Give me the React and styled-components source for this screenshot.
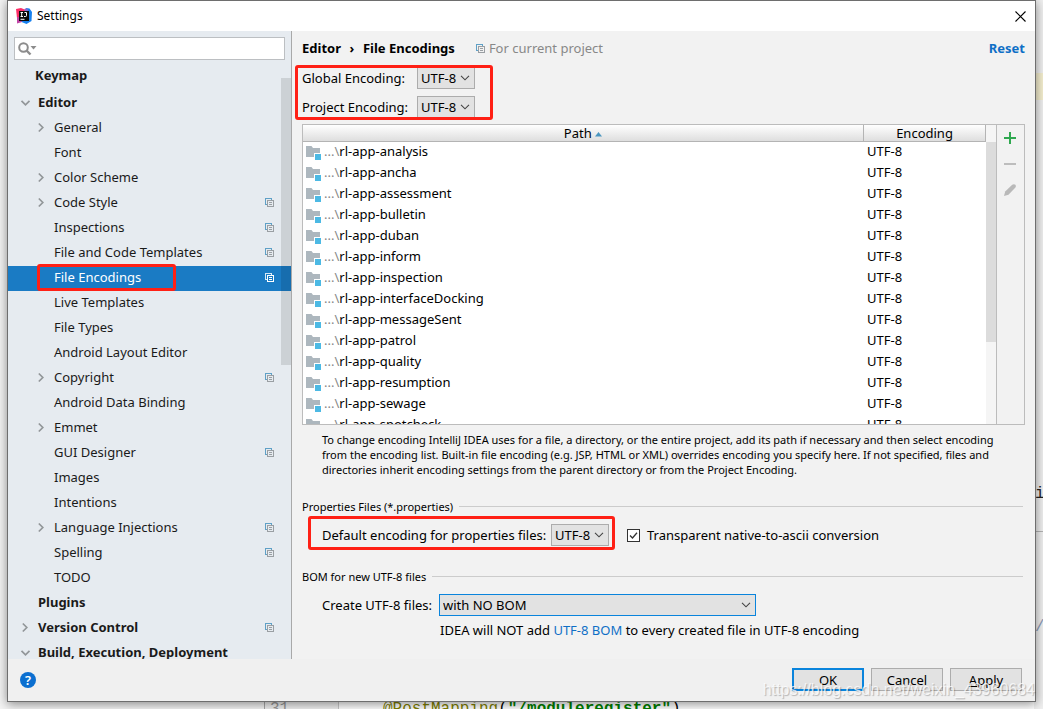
import React, { useState } from "react";
import styled, { createGlobalStyle, css } from "styled-components";

const GlobalStyle = createGlobalStyle`
  *, *::before, *::after { box-sizing: border-box; }
  body {
    margin: 0;
    background: #ffffff;
    color: #000000;
    font: 13px/20px "Noto Sans", "Open Sans", "Noto Sans CJK SC", sans-serif;
  }
  button, input, select { font: inherit; color: inherit; margin: 0; }
`;

/* ---------- editor behind the dialog ---------- */

const Page = styled.div`
  position: relative;
  height: 100vh;
  padding: 0 7px 7px;
  overflow: hidden;
`;

const Backdrop = styled.div`
  position: absolute;
  inset: 0;
  display: flex;
  align-items: stretch;
  background: #ffffff;
  font: 16px/18px "Liberation Mono", monospace;
`;

const ProjectPane = styled.div`
  flex: none;
  width: 265px;
  background: #f4f4f4;
  border-right: 1px solid #a8a8a8;
`;

const Gutter = styled.div`
  flex: none;
  display: flex;
  align-items: flex-end;
  width: 74px;
  height: calc(100% + 9px);
  padding-left: 5px;
  background: #f0f0f0;
  border-right: 1px solid #c8c8c8;
  color: #999999;
`;

const CodeArea = styled.div`
  flex: 1;
  display: flex;
  align-items: flex-end;
  height: calc(100% + 9px);
  padding-left: 44px;
  color: #808000;
`;

const Code = styled.code`
  font: inherit;
  white-space: nowrap;
  i { font-style: normal; color: #000000; }
  b { color: #008000; }
`;

const EditorStripe = styled.div`
  flex: none;
  display: flex;
  flex-direction: column;
  width: 9px;
  background: #f0f0f0;
`;

const StripeMark = styled.div`
  flex: none;
  height: 27px;
  margin: 73px 0 385px;
  background: #f5efcf;
`;

const StripeText = styled.span`
  flex: none;
  height: 47px;
  margin-bottom: 86px;
  padding-left: 1px;
  color: ${(p) => (p.$muted ? "#8c9cb8" : "#222222")};
  border-bottom: 1px solid ${(p) => (p.$muted ? "transparent" : "#b4b4b4")};
`;

/* ---------- dialog frame ---------- */

const Dialog = styled.main`
  position: relative;
  display: flex;
  flex-direction: column;
  height: 100%;
  border: 1px solid #6e6e6e;
  background: #f2f2f2;
  box-shadow: 0 2px 10px rgba(0, 0, 0, 0.45);
`;

const TitleBar = styled.header`
  flex: none;
  display: flex;
  align-items: center;
  gap: 5px;
  height: 30px;
  padding: 0 4px 0 8px;
  background: #ffffff;
`;

const Title = styled.h1`
  flex: 1;
  margin: 0;
  font-size: 12px;
  font-weight: 400;
`;

const PlainButton = styled.button`
  display: flex;
  align-items: center;
  justify-content: center;
  width: 22px;
  height: 22px;
  padding: 0;
  border: 0;
  background: none;
`;

const Body = styled.div`
  flex: 1;
  display: flex;
  min-height: 0;
`;

/* ---------- settings tree ---------- */

const Sidebar = styled.nav`
  position: relative;
  flex: none;
  display: flex;
  flex-direction: column;
  width: 284px;
  overflow: hidden;
  background: #e6ebf0;
  border-right: 1px solid #a9a9a9;
`;

const SearchBox = styled.label`
  flex: none;
  display: flex;
  align-items: center;
  height: 23px;
  margin: 6px 6px 0;
  padding-left: 3px;
  background: #ffffff;
  border: 1px solid #bcbfc2;
`;

const SearchInput = styled.input`
  flex: 1;
  min-width: 0;
  height: 20px;
  padding: 0 4px;
  border: 0;
  outline: 0;
  background: transparent;
`;

const Tree = styled.ul`
  margin: 0;
  padding: 4px 0 0;
  list-style: none;
`;

const indents = { top: 27, group: 12, item: 28 };

const TreeRow = styled.li`
  display: flex;
  align-items: center;
  height: 25px;
  margin-bottom: ${(p) => (p.$level === "top" ? 2 : 0)}px;
  padding: 0 17px 2px ${(p) => indents[p.$level]}px;
  color: #1a1a1a;
  font-weight: ${(p) => (p.$level === "item" ? 400 : 700)};
  ${(p) =>
    p.$selected &&
    css`
      background: #1a7bc4;
      color: #ffffff;
    `}
`;

const Arrow = styled.span`
  display: flex;
  align-items: center;
  width: 18px;
`;

const TreeLabel = styled.a`
  flex: 1;
  padding-bottom: 2px;
  color: inherit;
  text-decoration: none;
  white-space: nowrap;
`;

const marked = css`
  position: relative;
  &::after {
    content: "";
    position: absolute;
    border: 3px solid #ff2015;
    border-radius: 3px;
    pointer-events: none;
  }
`;

const MarkedRow = styled(TreeRow)`
  ${marked}
  &::after { inset: -2px 115px 0 29px; }
`;

const TreeScroll = styled.div`
  position: absolute;
  top: 47px;
  right: 0;
  width: 10px;
  height: 287px;
  background: rgba(0, 0, 0, 0.11);
`;

/* ---------- settings page ---------- */

const Content = styled.section`
  flex: 1;
  min-width: 0;
  padding: 7px 10px 0;
`;

const Crumbs = styled.div`
  display: flex;
  align-items: center;
  height: 20px;
  font-weight: 700;
`;

const CrumbSep = styled.span`
  width: 22px;
  text-align: center;
`;

const Scope = styled.span`
  flex: 1;
  display: flex;
  align-items: center;
  gap: 4px;
  margin-left: 21px;
  color: #888888;
  font-weight: 400;
`;

const Link = styled.a`
  color: #0f6fc6;
  text-decoration: none;
`;

const EncodingBlock = styled.div`
  ${marked}
  display: grid;
  row-gap: 7px;
  width: 191px;
  padding: 9px 0 6px;
  &::after { inset: 7px 0 4px -7px; }
`;

const Field = styled.div`
  display: flex;
  align-items: center;
`;

const FieldLabel = styled.label`
  width: ${(p) => p.$width}px;
  padding-bottom: 1px;
  white-space: nowrap;
`;

const SelectFrame = styled.span`
  display: inline-grid;
  align-items: center;
  width: ${(p) => p.$width}px;
  svg {
    grid-area: 1 / 1;
    justify-self: end;
    margin-right: 5px;
    pointer-events: none;
  }
`;

const SelectBox = styled.select`
  grid-area: 1 / 1;
  width: 100%;
  height: 22px;
  padding: 0 3px 1px;
  appearance: none;
  border: 1px solid ${(p) => (p.$focused ? "#0a84dc" : "#acacac")};
  border-radius: 0;
  outline: 0;
  background: #e2e2e2;
`;

const TablePanel = styled.div`
  display: flex;
  height: 301px;
  border: 1px solid #bcbcbc;
  background: #f2f2f2;
`;

const TableView = styled.div`
  flex: 1;
  min-width: 0;
  overflow: hidden;
  background: #ffffff;
`;

const Table = styled.table`
  width: 100%;
  table-layout: fixed;
  border-collapse: separate;
  border-spacing: 0;
`;

const HeadCell = styled.th`
  height: 17px;
  width: ${(p) => p.$width || "auto"};
  padding: 0;
  border-right: 1px solid #b4b4b4;
  border-bottom: 1px solid #b4b4b4;
  background: linear-gradient(#ffffff, #dedede);
  font-weight: 400;
  line-height: 16px;
`;

const Cell = styled.td`
  height: 21px;
  padding: 0 3px 3px;
  line-height: 18px;
`;

const PathLabel = styled.span`
  display: flex;
  align-items: flex-end;
  gap: 2px;
  height: 18px;
  i { font-style: normal; color: #888888; }
`;

const Track = styled.div`
  width: 10px;
  padding-top: 17px;
  background: #f5f5f5;
`;

const Thumb = styled.div`
  height: 200px;
  background: #dcdcdc;
`;

const ToolColumn = styled.div`
  display: flex;
  flex-direction: column;
  align-items: center;
  gap: 4px;
  width: 28px;
  padding: 2px 2px 0 0;
  border-left: 1px solid #bcbcbc;
`;

const Hint = styled.p`
  margin: 7px 0 20px 20px;
  font-size: 11px;
  line-height: 15px;
  white-space: nowrap;
`;

const SectionTitle = styled.h2`
  display: flex;
  align-items: center;
  gap: 6px;
  margin: 0;
  padding-right: 2px;
  font-size: 11px;
  font-weight: 400;
  &::after {
    content: "";
    flex: 1;
    height: 1px;
    margin-bottom: 2px;
    background: #cccccc;
  }
`;

const PropertiesRow = styled.div`
  display: flex;
  align-items: center;
  gap: 18px;
  margin: 7px 0 21px 20px;
`;

const MarkedField = styled(Field)`
  ${marked}
  &::after { inset: -8px -6px -4px -14px; }
`;

const CheckLabel = styled.label`
  display: flex;
  align-items: center;
  gap: 7px;
`;

const Checkbox = styled.input`
  appearance: none;
  width: 13px;
  height: 13px;
  border: 1px solid #333333;
  background: #ffffff;
`;

const CheckFrame = styled.span`
  display: grid;
  > * { grid-area: 1 / 1; }
  svg { pointer-events: none; }
`;

const BomBlock = styled.div`
  display: grid;
  row-gap: 4px;
  padding: 7px 0 0 20px;
`;

const BomNote = styled.p`
  margin: 0 0 0 118px;
`;

/* ---------- footer ---------- */

const Footer = styled.footer`
  flex: none;
  display: flex;
  align-items: center;
  gap: 7px;
  height: 42px;
  padding: 0 13px 1px 12px;
  background: #f0f0f0;
`;

const HelpButton = styled.button`
  width: 16px;
  height: 16px;
  margin-right: auto;
  padding: 0;
  border: 0;
  border-radius: 50%;
  background: #0b6fd0;
  color: #ffffff;
  font-weight: 600;
  line-height: 16px;
`;

const PushButton = styled.button`
  width: 72px;
  height: 23px;
  padding: 0;
  border: ${(p) => (p.$primary ? "2px solid #0a84dc" : "1px solid #acacac")};
  background: #e2e2e2;
  line-height: 18px;
`;

const Watermark = styled.div`
  position: absolute;
  right: 8px;
  bottom: 9px;
  color: rgba(255, 255, 255, 0.75);
  font: 16px/20px "Liberation Sans", Arial, sans-serif;
  text-shadow: 1px 1px 1px rgba(0, 0, 0, 0.25);
  pointer-events: none;
`;

/* ---------- icons ---------- */

const Chevron = ({ open }) => (
  <svg width="11" height="11" viewBox="0 0 11 11" fill="none" stroke="#929699" strokeWidth="1.7" aria-hidden="true">
    <path d={open ? "M1.5 3.8 5.5 7.8 9.5 3.8" : "M2.8 1.5 6.8 5.5 2.8 9.5"} />
  </svg>
);

const ProjectIcon = ({ light }) => (
  <svg width="9" height="9" viewBox="0 0 9 9" fill="none" aria-hidden="true" shapeRendering="crispEdges">
    <path d="M2 6.5H.5V.5h6V2" stroke={light ? "#d5e8f6" : "#5fa0c6"} />
    <path d="M2.5 2.5h6v6h-6zM4 4.5h3M4 6.5h3" stroke={light ? "#ffffff" : "#9a9fa3"} />
  </svg>
);

const DropArrow = () => (
  <svg width="10" height="6" viewBox="0 0 10 6" fill="none" stroke="#444444" strokeWidth="1.1" aria-hidden="true">
    <path d="M1 .8 5 4.8 9 .8" />
  </svg>
);

const FolderIcon = () => (
  <svg width="16" height="14" viewBox="0 0 16 14" aria-hidden="true">
    <path d="M0 0h5.5L7 2h7v9H0z" fill="#adb7be" />
    <path d="M8 7h8v7H8z" fill="#ffffff" />
    <path d="M9 8h6v6H9z" fill="#4cb9e4" />
  </svg>
);

const AppIcon = () => (
  <svg width="16" height="16" viewBox="0 0 16 16" aria-hidden="true">
    <path d="M0 1 5 0l5 2-3 7-6 1z" fill="#fc2d66" />
    <path d="M1 9 1 15.500l5-1.500 3-4z" fill="#c246a8" />
    <path d="M10 0l3.500.5L16 4l-.5 9-5 3-5-2 4-6z" fill="#1780ee" />
    <path d="M9 .5l2.500 0 .5 3-4-1z" fill="#8a6ad0" />
    <path d="M3 3h10v10H3z" fill="#0a0a0a" />
    <path d="M4.500 4.500h2.500M5.700 4.500v4M4.500 8.500h2.500M8 8.500h1.500q1 0 1-1v-3H8.500M4.500 11.300h4" stroke="#ffffff" strokeWidth="1" fill="none" />
  </svg>
);

const rowsTree = [
  { label: "Keymap", level: "top" },
  { label: "Editor", level: "group", arrow: "open" },
  { label: "General", arrow: "closed" },
  { label: "Font" },
  { label: "Color Scheme", arrow: "closed" },
  { label: "Code Style", arrow: "closed", project: true },
  { label: "Inspections", project: true },
  { label: "File and Code Templates", project: true },
  { label: "File Encodings", project: true, selected: true },
  { label: "Live Templates" },
  { label: "File Types" },
  { label: "Android Layout Editor" },
  { label: "Copyright", arrow: "closed", project: true },
  { label: "Android Data Binding" },
  { label: "Emmet", arrow: "closed" },
  { label: "GUI Designer", project: true },
  { label: "Images" },
  { label: "Intentions" },
  { label: "Language Injections", arrow: "closed", project: true },
  { label: "Spelling", project: true },
  { label: "TODO" },
  { label: "Plugins", level: "group" },
  { label: "Version Control", level: "group", arrow: "closed", project: true },
  { label: "Build, Execution, Deployment", level: "group", arrow: "open" },
];

const modules = [
  "analysis", "ancha", "assessment", "bulletin", "duban", "inform", "inspection",
  "interfaceDocking", "messageSent", "patrol", "quality", "resumption", "sewage", "spotcheck",
];

function EncodingSelect({ id, width, focused, options }) {
  return (
    <SelectFrame $width={width}>
      <SelectBox id={id} $focused={focused} defaultValue={options[0]}>
        {options.map((o) => (
          <option key={o}>{o}</option>
        ))}
      </SelectBox>
      <DropArrow />
    </SelectFrame>
  );
}

function TreeItem({ label, level = "item", arrow, project, selected }) {
  const Row = selected ? MarkedRow : TreeRow;
  return (
    <Row $level={level} $selected={selected}>
      {level !== "top" && <Arrow>{arrow && <Chevron open={arrow === "open"} />}</Arrow>}
      <TreeLabel href="#" aria-current={selected ? "page" : undefined}>{label}</TreeLabel>
      {project && <ProjectIcon light={selected} />}
    </Row>
  );
}

export default function App() {
  const [native, setNative] = useState(true);
  const encodings = ["UTF-8", "GBK", "ISO-8859-1"];

  return (
    <Page>
      <GlobalStyle />
      <Backdrop aria-hidden="true">
        <ProjectPane />
        <Gutter>31</Gutter>
        <CodeArea>
          <Code>
            @PostMapping<i>(</i><b>"/moduleregister"</b><i>)</i>
          </Code>
        </CodeArea>
        <EditorStripe>
          <StripeMark />
          <StripeText>i</StripeText>
          <StripeText $muted>/</StripeText>
        </EditorStripe>
      </Backdrop>

      <Dialog>
        <TitleBar>
          <AppIcon />
          <Title>Settings</Title>
          <PlainButton type="button" aria-label="Close">
            <svg width="11" height="11" viewBox="0 0 11 11" stroke="#000000" strokeWidth="1.1" aria-hidden="true">
              <path d="M.5.5l10 10M10.5.5l-10 10" />
            </svg>
          </PlainButton>
        </TitleBar>

        <Body>
          <Sidebar>
            <SearchBox>
              <svg width="19" height="14" viewBox="0 0 19 14" fill="none" aria-hidden="true">
                <circle cx="5.5" cy="5.5" r="4.3" stroke="#8c8c8c" strokeWidth="2" />
                <path d="M8.5 8.5l4 4" stroke="#8c8c8c" strokeWidth="2.4" />
                <path d="M12.5 4h6l-3 3.5z" fill="#8c8c8c" />
              </svg>
              <SearchInput type="text" aria-label="Search settings" />
            </SearchBox>
            <Tree>
              {rowsTree.map((r) => (
                <TreeItem key={r.label} {...r} />
              ))}
            </Tree>
            <TreeScroll />
          </Sidebar>

          <Content>
            <Crumbs>
              <span>Editor</span>
              <CrumbSep>›</CrumbSep>
              <span>File Encodings</span>
              <Scope>
                <ProjectIcon />
                For current project
              </Scope>
              <Link href="#">Reset</Link>
            </Crumbs>

            <EncodingBlock>
              <Field>
                <FieldLabel htmlFor="global" $width={115}>Global Encoding:</FieldLabel>
                <EncodingSelect id="global" width={58} options={encodings} />
              </Field>
              <Field>
                <FieldLabel htmlFor="project" $width={115}>Project Encoding:</FieldLabel>
                <EncodingSelect id="project" width={58} options={encodings} />
              </Field>
            </EncodingBlock>

            <TablePanel>
              <TableView>
                <Table>
                  <thead>
                    <tr>
                      <HeadCell>
                        Path{" "}
                        <svg width="7" height="7" viewBox="0 0 7 7" aria-hidden="true">
                          <path d="M0 5.5 3.5 1 7 5.5z" fill="#4a96c0" />
                        </svg>
                      </HeadCell>
                      <HeadCell $width="122px">Encoding</HeadCell>
                    </tr>
                  </thead>
                  <tbody>
                    {modules.map((m) => (
                      <tr key={m}>
                        <Cell>
                          <PathLabel>
                            <FolderIcon />
                            <span><i>...\</i>rl-app-{m}</span>
                          </PathLabel>
                        </Cell>
                        <Cell>UTF-8</Cell>
                      </tr>
                    ))}
                  </tbody>
                </Table>
              </TableView>
              <Track><Thumb /></Track>
              <ToolColumn>
                <PlainButton type="button" aria-label="Add">
                  <svg width="12" height="12" viewBox="0 0 12 12" aria-hidden="true">
                    <path d="M5 0h2v5h5v2H7v5H5V7H0V5h5z" fill="#2fa84f" />
                  </svg>
                </PlainButton>
                <PlainButton type="button" aria-label="Remove">
                  <svg width="12" height="12" viewBox="0 0 12 12" aria-hidden="true">
                    <path d="M0 5h12v2H0z" fill="#bdbdbd" />
                  </svg>
                </PlainButton>
                <PlainButton type="button" aria-label="Edit">
                  <svg width="12" height="12" viewBox="0 0 12 12" aria-hidden="true">
                    <path d="M0 12l1.2-4.5L8.2.8Q10 -.5 11.4.8 12.5 2.2 11.2 3.8L4.5 10.7z" fill="#b9b9b9" />
                  </svg>
                </PlainButton>
              </ToolColumn>
            </TablePanel>

            <Hint>
              To change encoding IntelliJ IDEA uses for a file, a directory, or the entire project, add its path if necessary and then select encoding
              <br />
              from the encoding list. Built-in file encoding (e.g. JSP, HTML or XML) overrides encoding you specify here. If not specified, files and
              <br />
              directories inherit encoding settings from the parent directory or from the Project Encoding.
            </Hint>

            <SectionTitle>Properties Files (*.properties)</SectionTitle>
            <PropertiesRow>
              <MarkedField>
                <FieldLabel htmlFor="props" $width={229}>Default encoding for properties files:</FieldLabel>
                <EncodingSelect id="props" width={58} options={encodings} />
              </MarkedField>
              <CheckLabel>
                <CheckFrame>
                  <Checkbox type="checkbox" checked={native} onChange={(e) => setNative(e.target.checked)} />
                  {native && (
                    <svg width="13" height="13" viewBox="0 0 13 13" fill="none" stroke="#333333" strokeWidth="1.3" aria-hidden="true">
                      <path d="M3 6.5 5.5 9 10 3.8" />
                    </svg>
                  )}
                </CheckFrame>
                Transparent native-to-ascii conversion
              </CheckLabel>
            </PropertiesRow>

            <SectionTitle>BOM for new UTF-8 files</SectionTitle>
            <BomBlock>
              <Field>
                <FieldLabel htmlFor="bom" $width={117}>Create UTF-8 files:</FieldLabel>
                <EncodingSelect id="bom" width={317} focused options={["with NO BOM", "with BOM"]} />
              </Field>
              <BomNote>
                IDEA will NOT add <Link href="#">UTF-8 BOM</Link> to every created file in UTF-8 encoding
              </BomNote>
            </BomBlock>
          </Content>
        </Body>

        <Footer>
          <HelpButton type="button" aria-label="Help">?</HelpButton>
          <PushButton type="button" $primary>OK</PushButton>
          <PushButton type="button">Cancel</PushButton>
          <PushButton type="button"><u>A</u>pply</PushButton>
        </Footer>
      </Dialog>
      <Watermark>https://blog.csdn.net/weixin_43960684</Watermark>
    </Page>
  );
}
